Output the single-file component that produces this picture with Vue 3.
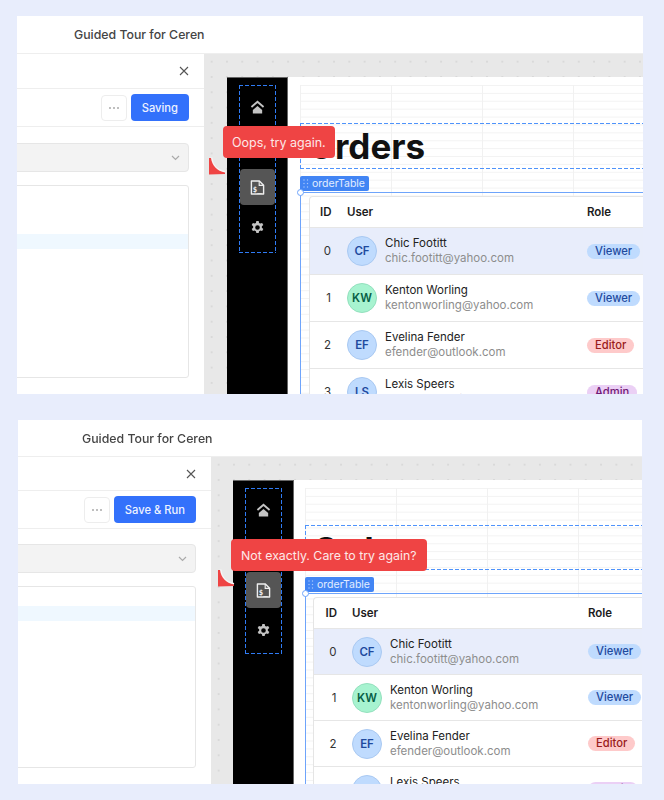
<script setup>
const users = [
  { id: 0, initials: 'CF', name: 'Chic Footitt', email: 'chic.footitt@yahoo.com', role: 'Viewer', tone: 'blue' },
  { id: 1, initials: 'KW', name: 'Kenton Worling', email: 'kentonworling@yahoo.com', role: 'Viewer', tone: 'green' },
  { id: 2, initials: 'EF', name: 'Evelina Fender', email: 'efender@outlook.com', role: 'Editor', tone: 'blue' },
  { id: 3, initials: 'LS', name: 'Lexis Speers', email: 'lspeers@gmail.com', role: 'Admin', tone: 'blue' }
]

const panels = [
  { key: 'first', action: 'Saving', message: 'Oops, try again.' },
  { key: 'second', action: 'Save & Run', message: 'Not exactly. Care to try again?' }
]
</script>

<template>
  <div class="page">
    <section v-for="panel in panels" :key="panel.key" class="tour" :class="`tour-${panel.key}`">
      <header class="tour-title">Guided Tour for Ceren</header>

      <div class="tour-body">
        <div class="editor">
          <div class="editor-top">
            <svg class="close" width="10" height="10" viewBox="0 0 10 10">
              <path d="M1 1l8 8M9 1l-8 8" stroke="#555" stroke-width="1.1" fill="none" />
            </svg>
          </div>
          <div class="editor-actions">
            <button class="more"><span></span><span></span><span></span></button>
            <button class="save">{{ panel.action }}</button>
          </div>
          <div class="editor-form">
            <div class="select">
              <svg width="9" height="6" viewBox="0 0 9 6">
                <path d="M1 1l3.5 3.5L8 1" stroke="#aaa" stroke-width="1.2" fill="none" />
              </svg>
            </div>
            <div class="code">
              <div class="code-line"></div>
            </div>
          </div>
        </div>

        <div class="canvas">
          <div class="app">
            <aside class="sidebar">
              <nav class="nav">
                <div class="nav-item">
                  <svg width="15" height="14" viewBox="0 0 16 15">
                    <path d="M1.5 7.5L8 1.8l6.5 5.7" stroke="#c4c4c4" stroke-width="2" fill="none" />
                    <path d="M8 6.5l5 4.3V14.500H3v-3.700z" fill="#c4c4c4" />
                  </svg>
                </div>
                <div class="nav-item"></div>
                <div class="nav-item nav-active">
                  <svg width="15" height="15" viewBox="0 0 16 16">
                    <path d="M1.500 1h8.500l4.500 4.500v9.500h-13z" fill="none" stroke="#eee" stroke-width="1.500" stroke-linejoin="round" />
                    <path d="M9.800 1v4.700h4.700" fill="none" stroke="#eee" stroke-width="1.200" />
                    <text x="3" y="12.300" class="file-glyph">$_</text>
                  </svg>
                </div>
                <div class="nav-item">
                  <svg width="15" height="15" viewBox="0 0 24 24">
                    <path fill="#c4c4c4" fill-rule="evenodd" d="M13.900 1.500h-3.800l-.6 3.100c-.7.300-1.300.6-1.900 1.100l-3-1-1.900 3.300 2.400 2.100a8 8 0 0 0 0 2.200l-2.400 2.100 1.900 3.300 3-1c.6.500 1.200.8 1.900 1.100l.6 3.100h3.800l.6-3.100c.7-.3 1.300-.6 1.900-1.100l3 1 1.900-3.300-2.400-2.100a8 8 0 0 0 0-2.200l2.400-2.100-1.900-3.300-3 1c-.6-.5-1.200-.8-1.900-1.100zM12 8.300a3.700 3.700 0 1 1 0 7.400 3.700 3.700 0 0 1 0-7.400z" />
                  </svg>
                </div>
              </nav>
            </aside>

            <main class="content">
              <div class="grid">
                <div class="heading"><h1>Orders</h1></div>
                <div class="tag">
                  <svg width="6" height="9" viewBox="0 0 6 9">
                    <g fill="#a9c8fb">
                      <circle cx="1" cy="1" r=".7" /><circle cx="4.500" cy="1" r=".7" />
                      <circle cx="1" cy="4.500" r=".7" /><circle cx="4.500" cy="4.500" r=".7" />
                      <circle cx="1" cy="8" r=".7" /><circle cx="4.500" cy="8" r=".7" />
                    </g>
                  </svg>
                  orderTable
                </div>
                <div class="selected">
                  <span class="handle"></span>
                  <div class="table">
                    <div class="row row-head">
                      <span class="cell-id">ID</span>
                      <span>User</span>
                      <span>Role</span>
                    </div>
                    <div v-for="user in users" :key="user.id" class="row" :class="{ 'row-on': user.id === 0 }">
                      <span class="cell-id cell-num">{{ user.id }}</span>
                      <div class="user">
                        <span class="avatar" :class="`avatar-${user.tone}`">{{ user.initials }}</span>
                        <div class="who">
                          <div class="name">{{ user.name }}</div>
                          <div class="email">{{ user.email }}</div>
                        </div>
                      </div>
                      <div><span class="chip" :class="`chip-${user.role.toLowerCase()}`">{{ user.role }}</span></div>
                    </div>
                  </div>
                </div>
              </div>
            </main>
          </div>
        </div>
      </div>

      <div class="bubble">{{ panel.message }}</div>
      <svg class="pointer" width="17" height="18" viewBox="0 0 17 18">
        <path d="M2.500 .5C3 8 8 13.500 16 15" stroke="#f6f6f6" stroke-width="2" fill="none" />
        <path d="M0 1h2C3 8.500 8 14 16 15.500V17L0 17.500z" fill="#ef4444" />
      </svg>
    </section>
  </div>
</template>

<style>
body {
  background: #e8edfc;
}
</style>

<style scoped>
.page {
  display: flex;
  flex-direction: column;
  gap: 26px;
  padding-top: 16px;
  font-family: Inter, "Liberation Sans", sans-serif;
  filter: blur(0.35px);
}

.tour {
  position: relative;
  display: flex;
  flex-direction: column;
  overflow: hidden;
  background: #fff;
  --pane: 187px;
  --app-left: 23px;
  --grid-left: 12px;
  --row-h: 47px;
  --nav-h: 168px;
  --table-left: 8px;
  --user-x: 27px;
  --role-x: 240px;
  --id-left: 10px;
  --name-gap: 8px;
}
.tour-first {
  width: 626px;
  height: 378px;
  margin-left: 17px;
}
.tour-second {
  width: 624px;
  height: 364px;
  margin-left: 18px;
  --pane: 193px;
  --app-left: 22px;
  --grid-left: 11px;
  --row-h: 46px;
  --nav-h: 166px;
  --table-left: 7px;
  --user-x: 26.500px;
  --role-x: 236px;
  --id-left: 11.500px;
  --name-gap: 8px;
}

.tour-title {
  flex: none;
  height: 38px;
  box-sizing: border-box;
  padding-left: 57px;
  display: flex;
  align-items: center;
  border-bottom: 1px solid #eeeeee;
  font-size: 12.300px;
  font-weight: 500;
  color: #444;
}
.tour-second .tour-title {
  height: 37px;
  padding-left: 64px;
}

.tour-body {
  flex: 1;
  min-height: 0;
  display: flex;
}

.editor {
  flex: none;
  width: var(--pane);
  display: flex;
  flex-direction: column;
  overflow: hidden;
}
.editor-top {
  flex: none;
  height: 35px;
  box-sizing: border-box;
  padding-right: 15px;
  display: flex;
  align-items: center;
  justify-content: flex-end;
  border-bottom: 1px solid #eeeeee;
}
.tour-second .editor-top {
  height: 34px;
}
.editor-actions {
  flex: none;
  height: 38px;
  box-sizing: border-box;
  padding-right: 15px;
  display: flex;
  align-items: center;
  justify-content: flex-end;
  gap: 4px;
  border-bottom: 1px solid #eeeeee;
}
.more {
  width: 26px;
  height: 26px;
  padding: 0;
  display: flex;
  align-items: center;
  justify-content: center;
  gap: 2px;
  background: #fff;
  border: 1px solid #ededed;
  border-radius: 4px;
}
.more span {
  width: 2px;
  height: 2px;
  border-radius: 50%;
  background: #aaa;
}
.save {
  height: 27px;
  padding: 0 11px;
  border: 0;
  border-radius: 4px;
  background: #3371fb;
  color: #eef3ff;
  font-family: inherit;
  font-size: 11.200px;
  font-weight: 500;
}
.editor-form {
  flex: 1;
  min-height: 0;
  padding: 16px 15px 16px 0;
  display: flex;
  flex-direction: column;
  gap: 13px;
}
.tour-second .editor-form {
  padding-top: 15px;
}
.select {
  flex: none;
  height: 29px;
  margin-left: -10px;
  box-sizing: border-box;
  padding-right: 8px;
  display: flex;
  align-items: center;
  justify-content: flex-end;
  background: #f3f3f3;
  border: 1px solid #e6e6e6;
  border-radius: 4px;
}
.code {
  flex: 1;
  margin-left: -10px;
  padding-top: 48px;
  background: #fff;
  border: 1px solid #e6e6e6;
  border-radius: 3px;
}
.tour-second .code {
  padding-top: 19px;
}
.code-line {
  height: 15px;
  background: #eff8ff;
}

.canvas {
  flex: 1;
  min-width: 0;
  box-sizing: border-box;
  padding: 23px 0 0 var(--app-left);
  background-color: #e8e8e8;
  background-image: radial-gradient(circle at center, #d9d9d9 0.9px, transparent 1px);
  background-size: 15.300px 15.300px;
}
.app {
  height: 100%;
  display: flex;
}
.sidebar {
  flex: none;
  width: 61px;
  box-sizing: border-box;
  padding: 7px 0 0 12px;
  background: #000;
  border-top: 1px solid #666;
  border-right: 1px solid #666;
}
.nav {
  --dash: #2f7bf5;
  width: 37px;
  height: var(--nav-h);
  box-sizing: border-box;
  padding: 4px 1px;
  display: flex;
  flex-direction: column;
  gap: 4px;
  background:
    repeating-linear-gradient(to right, var(--dash) 0 4px, transparent 4px 6px) left top / 100% 1px no-repeat,
    repeating-linear-gradient(to right, var(--dash) 0 4px, transparent 4px 6px) left bottom / 100% 1px no-repeat,
    repeating-linear-gradient(to bottom, var(--dash) 0 4px, transparent 4px 6px) left top / 1px 100% no-repeat,
    repeating-linear-gradient(to bottom, var(--dash) 0 4px, transparent 4px 6px) right top / 1px 100% no-repeat;
}
.nav-item {
  flex: none;
  height: 36px;
  display: flex;
  align-items: center;
  justify-content: center;
  border-radius: 4px;
}
.nav-active {
  background: #555;
}
.file-glyph {
  font-family: "DejaVu Sans Mono", monospace;
  font-size: 8px;
  font-weight: 700;
  fill: #eee;
}

.content {
  flex: 1;
  min-width: 0;
  overflow: hidden;
  box-sizing: border-box;
  padding: 8px 0 0 var(--grid-left);
  background: #fff;
}
.grid {
  height: 100%;
  padding-top: 38px;
  box-sizing: border-box;
  background-image:
    linear-gradient(to right, #f1f1f1 1px, transparent 1px),
    linear-gradient(to bottom, #f3f3f3 1px, transparent 1px);
  background-size: 91px 100%, 100% 7.900px;
  background-position: 0 0, 0 0;
}
.tour-second .grid {
  padding-top: 37px;
}
.heading {
  --dash: #4f93fb;
  height: 46px;
  box-sizing: border-box;
  padding-left: 8px;
  display: flex;
  align-items: center;
  background:
    repeating-linear-gradient(to right, var(--dash) 0 4px, transparent 4px 6px) left top / 100% 1px no-repeat,
    repeating-linear-gradient(to right, var(--dash) 0 4px, transparent 4px 6px) left bottom / 100% 1px no-repeat,
    repeating-linear-gradient(to bottom, var(--dash) 0 4px, transparent 4px 6px) left top / 1px 100% no-repeat;
}
.tour-second .heading {
  height: 45px;
  padding-top: 5px;
}
.heading h1 {
  margin: 0;
  font-size: 35px;
  font-weight: 700;
  line-height: 44px;
  color: #111;
}
.tour-second .heading h1 {
  font-size: 34px;
}
.tag {
  width: 69px;
  height: 15px;
  margin-top: 7px;
  box-sizing: border-box;
  padding-left: 3px;
  display: flex;
  align-items: center;
  gap: 3px;
  background: #4285f4;
  border-radius: 2px;
  color: #e3edff;
  font-size: 10.500px;
  white-space: nowrap;
}
.selected {
  position: relative;
  margin-top: 1px;
  padding: 3px 0 0 var(--table-left);
  border-top: 1px solid #6ea4fb;
  border-left: 1px solid #6ea4fb;
}
.handle {
  position: absolute;
  left: -4px;
  top: -4px;
  width: 5px;
  height: 5px;
  background: #fff;
  border: 1px solid #6ea4fb;
  border-radius: 50%;
}
.table {
  background: #fff;
  border: 1px solid #e5e5e5;
  border-right: 0;
  border-radius: 4px 0 0 0;
  width: 400px;
}
.row {
  height: var(--row-h);
  box-sizing: border-box;
  display: flex;
  align-items: center;
  border-top: 1px solid #e6e6e6;
  font-size: 11.500px;
  color: #222;
}
.row-head {
  height: 30px;
  padding-bottom: 1px;
  border-top: 0;
  font-weight: 600;
  color: #1c1c1c;
}
.row-on {
  background: #e8edfb;
}
.cell-id {
  flex: none;
  width: var(--user-x);
  margin-left: var(--id-left);
}
.cell-num {
  box-sizing: border-box;
  padding-right: calc(var(--user-x) - 11px);
  text-align: right;
  color: #333;
}
.row > :nth-child(2) {
  flex: none;
  width: var(--role-x);
}
.user {
  display: flex;
  align-items: center;
  gap: var(--name-gap);
}
.avatar {
  flex: none;
  width: 30px;
  height: 30px;
  box-sizing: border-box;
  display: flex;
  align-items: center;
  justify-content: center;
  border-radius: 50%;
  font-weight: 600;
  font-size: 11.500px;
}
.avatar-blue {
  background: #bfdbfe;
  border: 1px solid #a9c9f2;
  color: #1e4a9e;
}
.avatar-green {
  background: #a7f3d0;
  border: 1px solid #93e0bd;
  color: #065f46;
}
.name {
  font-size: 11.500px;
  line-height: 15px;
  color: #222;
}
.email {
  font-size: 11.500px;
  line-height: 15px;
  color: #8d8d8d;
}
.chip {
  display: inline-block;
  height: 15px;
  padding: 0 8px;
  border-radius: 8px;
  font-size: 11.200px;
  font-weight: 500;
  line-height: 15px;
}
.chip-viewer {
  background: #bfdbfe;
  color: #1e4a9e;
}
.chip-editor {
  background: #fecaca;
  color: #991b1b;
}
.chip-admin {
  background: #ebd0f5;
  color: #701a75;
}

.bubble {
  position: absolute;
  left: 206px;
  top: 110px;
  height: 32px;
  box-sizing: border-box;
  padding: 0 9px;
  display: flex;
  align-items: center;
  background: #ef4444;
  border-radius: 4px;
  color: #fde8e8;
  font-size: 12.500px;
  white-space: nowrap;
}
.pointer {
  position: absolute;
  left: 192px;
  top: 141px;
}
.tour-second .bubble {
  left: 213px;
  top: 119px;
  padding: 0 10px;
  font-size: 12.350px;
}
.tour-second .pointer {
  left: 200px;
  top: 149px;
}
</style>
